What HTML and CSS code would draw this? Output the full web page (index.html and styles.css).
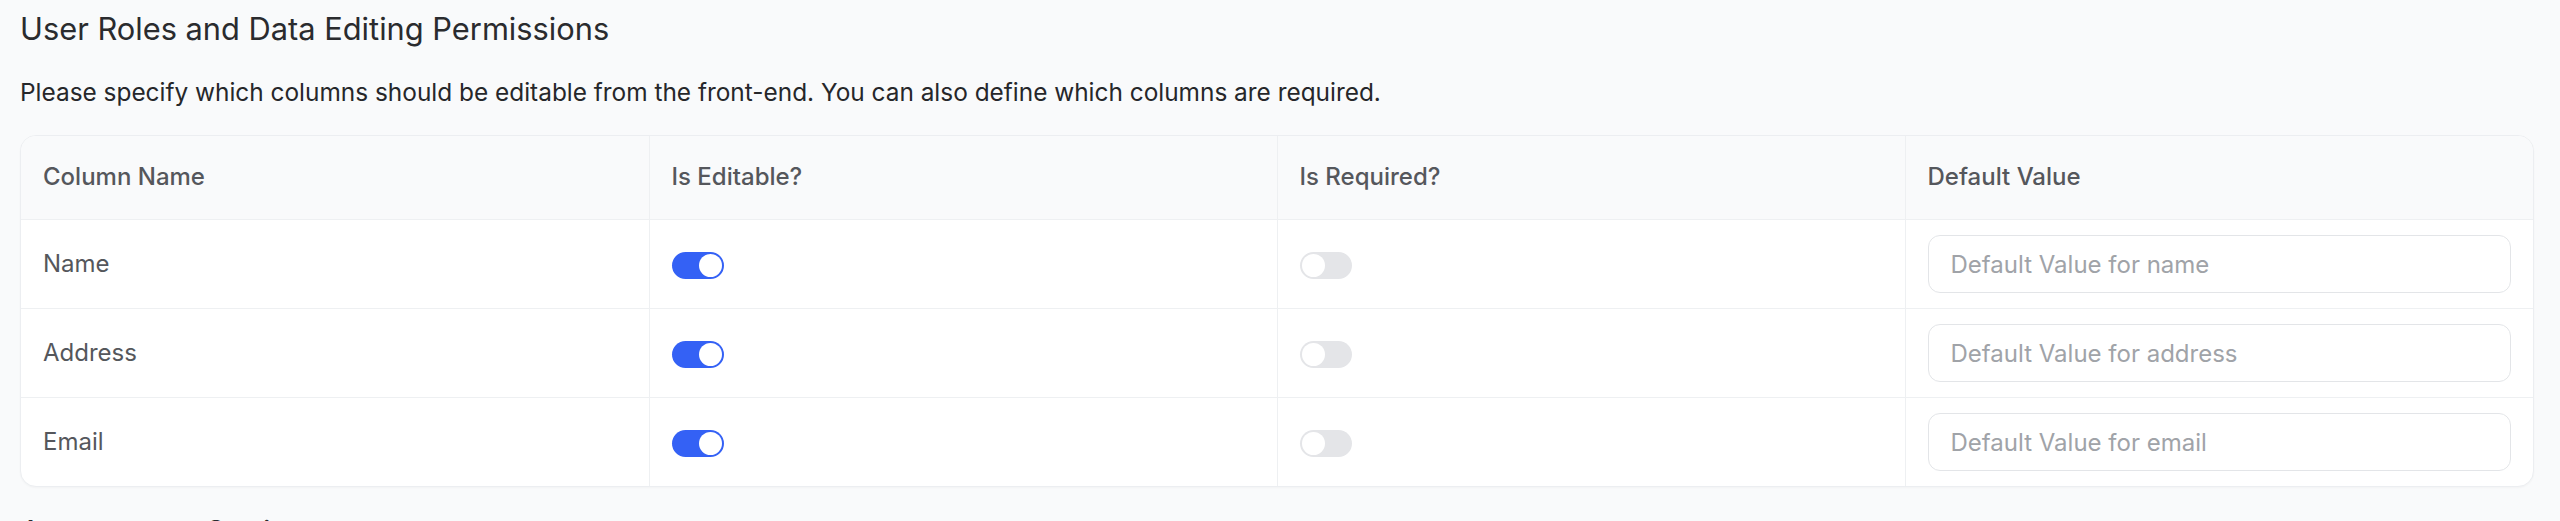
FILE: index.html
```html
<!DOCTYPE html>
<html lang="en">
<head>
  <meta charset="UTF-8">
  <meta name="viewport" content="width=device-width, initial-scale=1.0">
  <title>User Roles and Data Editing Permissions</title>
  <link rel="stylesheet" href="styles.css">
</head>
<body>
  <div class="page">
    <h2 class="section-title">User Roles and Data Editing Permissions</h2>
    <p class="section-desc">Please specify which columns should be editable from the front-end. You can also define which columns are required.</p>

    <div class="table-wrap">
      <table class="perm-table">
        <thead>
          <tr>
            <th>Column Name</th>
            <th>Is Editable?</th>
            <th>Is Required?</th>
            <th>Default Value</th>
          </tr>
        </thead>
        <tbody>
          <tr>
            <td>Name</td>
            <td><span class="toggle on"><span class="knob"></span></span></td>
            <td><span class="toggle"><span class="knob"></span></span></td>
            <td><input class="default-input" type="text" placeholder="Default Value for name"></td>
          </tr>
          <tr>
            <td>Address</td>
            <td><span class="toggle on"><span class="knob"></span></span></td>
            <td><span class="toggle"><span class="knob"></span></span></td>
            <td><input class="default-input" type="text" placeholder="Default Value for address"></td>
          </tr>
          <tr>
            <td>Email</td>
            <td><span class="toggle on"><span class="knob"></span></span></td>
            <td><span class="toggle"><span class="knob"></span></span></td>
            <td><input class="default-input" type="text" placeholder="Default Value for email"></td>
          </tr>
        </tbody>
      </table>
    </div>

    <h2 class="section-title next">Appearance Settings</h2>
  </div>
</body>
</html>
```

FILE: styles.css
```css
body {
  margin: 0;
  background-color: #f9fafb;
  font-family: Inter, "Noto Sans", sans-serif;
}
.page {
  padding: 9px 26px 40px 20px;
}
.section-title {
  margin: 0;
  font-size: 30.8px;
  line-height: 40px;
  font-weight: 400;
  color: #2a2b2e;
}
.section-title.next {
  margin-top: 25px;
}
.section-desc {
  margin: 25px 0 0;
  font-size: 24.4px;
  line-height: 36px;
  color: #26272a;
}
.table-wrap {
  margin-top: 25px;
  background-color: #fff;
  border: 1px solid #eceef1;
  border-radius: 16px;
  overflow: hidden;
  box-shadow: 0 1px 2px rgba(0, 0, 0, 0.03);
}
.perm-table {
  width: 100%;
  table-layout: fixed;
  border-collapse: collapse;
}
.perm-table th,
.perm-table td {
  text-align: left;
  font-size: 24px;
  line-height: 36px;
  color: #55575c;
  border-left: 1px solid #eef0f2;
  border-top: 1px solid #eef0f2;
}
.perm-table th:first-child,
.perm-table td:first-child {
  border-left: none;
}
.perm-table thead th {
  border-top: none;
  background-color: #f9fafb;
  font-weight: 500;
  padding: 23px 22px 24px;
}
.perm-table td {
  padding: 15px 22px;
  height: 58px;
  vertical-align: middle;
}
.toggle {
  display: inline-flex;
  align-items: center;
  width: 52px;
  height: 27px;
  padding: 0 2px;
  box-sizing: border-box;
  border-radius: 14px;
  background-color: #e4e5e8;
  vertical-align: middle;
}
.toggle .knob {
  width: 23px;
  height: 23px;
  border-radius: 50%;
  background-color: #fff;
}
.toggle.on {
  background-color: #3461f5;
  justify-content: flex-end;
}
.default-input {
  display: block;
  width: 100%;
  height: 58px;
  box-sizing: border-box;
  padding: 0 22px;
  border: 1.5px solid #e3e5e8;
  border-radius: 12px;
  background-color: #fff;
  font-family: inherit;
  font-size: 24px;
  color: #333;
  outline: none;
}
.default-input::placeholder {
  color: #a0a3a8;
}
```
